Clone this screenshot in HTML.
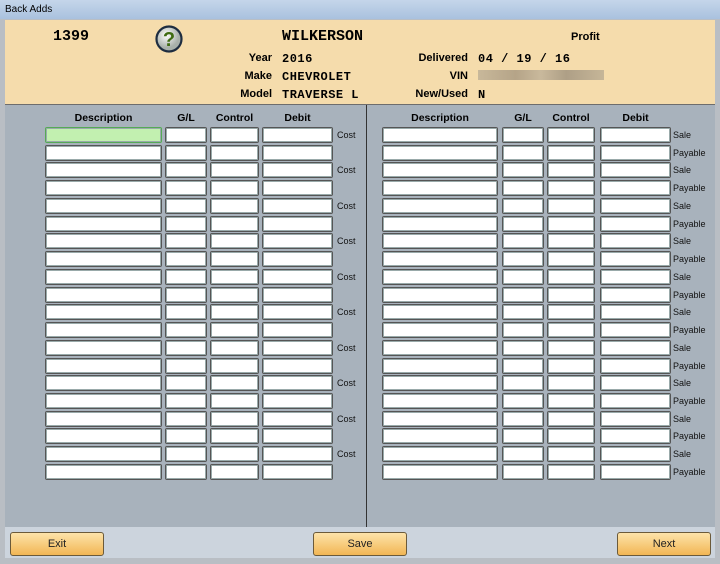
<!DOCTYPE html>
<html><head><style>
*{box-sizing:border-box;margin:0;padding:0}
body{width:720px;height:564px;overflow:hidden;background:#b9bec4;font-family:"Liberation Sans",sans-serif;position:relative}
.title{position:absolute;left:0;top:0;width:720px;height:19px;background:linear-gradient(#c5d6ea,#a9c1de);font-size:10px;color:#000;padding:4px 0 0 5px}
.hdr{position:absolute;left:5px;top:20px;width:710px;height:85px;background:#f5dcac;border-bottom:1px solid #6d6d6d}
.mono{font-family:"Liberation Mono",monospace;font-weight:bold}
.a{position:absolute;white-space:nowrap}
.lbl{font-size:11px;font-weight:bold;text-align:right}
.val{font-family:"Liberation Mono",monospace;font-size:12px;font-weight:bold;letter-spacing:0.5px}
.panel{position:absolute;left:5px;top:105px;width:710px;height:422px;background:#a8b2bc}
.div{position:absolute;left:366px;top:105px;width:1px;height:422px;background:#333}
.foot{position:absolute;left:5px;top:527px;width:710px;height:31px;background:#ccd4dd}
.btn{position:absolute;top:532px;height:24px;border:1px solid #6b5a3a;border-radius:3px;background:linear-gradient(#fde3aa,#f2b654);font-size:11px;text-align:center;line-height:22px;color:#222}
.rows{position:absolute;top:127px}
.r{height:17.74px;position:relative}
.b{position:absolute;top:0;height:16px;background:#fff;border:1px solid #555;border-radius:2px;box-shadow:inset 0 0 0 1px #9aa}
.t{position:absolute;top:3px;font-size:9px;color:#111}
.ch{position:absolute;top:112px;font-size:10.5px;font-weight:bold;text-align:center}
</style></head><body>
<div class="title">Back Adds</div>
<div class="hdr"></div>
<div class="a mono" style="left:53px;top:28px;font-size:15px">1399</div>
<svg class="a" style="left:155px;top:25px" width="28" height="28" viewBox="0 0 28 28"><defs><radialGradient id="g" cx="0.4" cy="0.35"><stop offset="0" stop-color="#fff"/><stop offset="1" stop-color="#a8b0aa"/></radialGradient></defs><circle cx="14" cy="14" r="12.5" fill="url(#g)" stroke="#1e2d40" stroke-width="2.2"/><text x="14" y="21" text-anchor="middle" font-family="Liberation Sans" font-weight="bold" font-size="20" fill="#3f6b12">?</text></svg>
<div class="a mono" style="left:282px;top:28px;font-size:15px">WILKERSON</div>
<div class="a lbl" style="right:448px;top:52px">Year</div>
<div class="a val" style="left:282px;top:52px">2016</div>
<div class="a lbl" style="right:448px;top:70px">Make</div>
<div class="a val" style="left:282px;top:70px">CHEVROLET</div>
<div class="a lbl" style="right:448px;top:88px">Model</div>
<div class="a val" style="left:282px;top:88px">TRAVERSE L</div>
<div class="a lbl" style="left:571px;top:31px">Profit</div>
<div class="a lbl" style="right:252px;top:52px">Delivered</div>
<div class="a val" style="left:478px;top:52px">04 / 19 / 16</div>
<div class="a lbl" style="right:252px;top:70px">VIN</div>
<div class="a" style="left:478px;top:70px;width:126px;height:10px;background:linear-gradient(90deg,#c8b89a,#b5a488 30%,#c9b99c 50%,#ae9f86 70%,#c6b698)"></div>
<div class="a lbl" style="right:252px;top:88px">New/Used</div>
<div class="a val" style="left:478px;top:88px">N</div>
<div class="panel"></div>
<div class="div"></div>
<div class="ch" style="left:45px;width:117px">Description</div>
<div class="ch" style="left:165px;width:42px">G/L</div>
<div class="ch" style="left:210px;width:49px">Control</div>
<div class="ch" style="left:262px;width:71px">Debit</div>
<div class="ch" style="left:382px;width:116px">Description</div>
<div class="ch" style="left:502px;width:42px">G/L</div>
<div class="ch" style="left:547px;width:48px">Control</div>
<div class="ch" style="left:600px;width:71px">Debit</div>
<div class="rows" style="left:0">
<div class="r"><div class="b" style="left:45px;width:117px;background:#c2f0b0;border-color:#5a5"></div><div class="b" style="left:165px;width:42px"></div><div class="b" style="left:210px;width:49px"></div><div class="b" style="left:262px;width:71px"></div><span class="t" style="left:337px">Cost</span></div>
<div class="r"><div class="b" style="left:45px;width:117px"></div><div class="b" style="left:165px;width:42px"></div><div class="b" style="left:210px;width:49px"></div><div class="b" style="left:262px;width:71px"></div></div>
<div class="r"><div class="b" style="left:45px;width:117px"></div><div class="b" style="left:165px;width:42px"></div><div class="b" style="left:210px;width:49px"></div><div class="b" style="left:262px;width:71px"></div><span class="t" style="left:337px">Cost</span></div>
<div class="r"><div class="b" style="left:45px;width:117px"></div><div class="b" style="left:165px;width:42px"></div><div class="b" style="left:210px;width:49px"></div><div class="b" style="left:262px;width:71px"></div></div>
<div class="r"><div class="b" style="left:45px;width:117px"></div><div class="b" style="left:165px;width:42px"></div><div class="b" style="left:210px;width:49px"></div><div class="b" style="left:262px;width:71px"></div><span class="t" style="left:337px">Cost</span></div>
<div class="r"><div class="b" style="left:45px;width:117px"></div><div class="b" style="left:165px;width:42px"></div><div class="b" style="left:210px;width:49px"></div><div class="b" style="left:262px;width:71px"></div></div>
<div class="r"><div class="b" style="left:45px;width:117px"></div><div class="b" style="left:165px;width:42px"></div><div class="b" style="left:210px;width:49px"></div><div class="b" style="left:262px;width:71px"></div><span class="t" style="left:337px">Cost</span></div>
<div class="r"><div class="b" style="left:45px;width:117px"></div><div class="b" style="left:165px;width:42px"></div><div class="b" style="left:210px;width:49px"></div><div class="b" style="left:262px;width:71px"></div></div>
<div class="r"><div class="b" style="left:45px;width:117px"></div><div class="b" style="left:165px;width:42px"></div><div class="b" style="left:210px;width:49px"></div><div class="b" style="left:262px;width:71px"></div><span class="t" style="left:337px">Cost</span></div>
<div class="r"><div class="b" style="left:45px;width:117px"></div><div class="b" style="left:165px;width:42px"></div><div class="b" style="left:210px;width:49px"></div><div class="b" style="left:262px;width:71px"></div></div>
<div class="r"><div class="b" style="left:45px;width:117px"></div><div class="b" style="left:165px;width:42px"></div><div class="b" style="left:210px;width:49px"></div><div class="b" style="left:262px;width:71px"></div><span class="t" style="left:337px">Cost</span></div>
<div class="r"><div class="b" style="left:45px;width:117px"></div><div class="b" style="left:165px;width:42px"></div><div class="b" style="left:210px;width:49px"></div><div class="b" style="left:262px;width:71px"></div></div>
<div class="r"><div class="b" style="left:45px;width:117px"></div><div class="b" style="left:165px;width:42px"></div><div class="b" style="left:210px;width:49px"></div><div class="b" style="left:262px;width:71px"></div><span class="t" style="left:337px">Cost</span></div>
<div class="r"><div class="b" style="left:45px;width:117px"></div><div class="b" style="left:165px;width:42px"></div><div class="b" style="left:210px;width:49px"></div><div class="b" style="left:262px;width:71px"></div></div>
<div class="r"><div class="b" style="left:45px;width:117px"></div><div class="b" style="left:165px;width:42px"></div><div class="b" style="left:210px;width:49px"></div><div class="b" style="left:262px;width:71px"></div><span class="t" style="left:337px">Cost</span></div>
<div class="r"><div class="b" style="left:45px;width:117px"></div><div class="b" style="left:165px;width:42px"></div><div class="b" style="left:210px;width:49px"></div><div class="b" style="left:262px;width:71px"></div></div>
<div class="r"><div class="b" style="left:45px;width:117px"></div><div class="b" style="left:165px;width:42px"></div><div class="b" style="left:210px;width:49px"></div><div class="b" style="left:262px;width:71px"></div><span class="t" style="left:337px">Cost</span></div>
<div class="r"><div class="b" style="left:45px;width:117px"></div><div class="b" style="left:165px;width:42px"></div><div class="b" style="left:210px;width:49px"></div><div class="b" style="left:262px;width:71px"></div></div>
<div class="r"><div class="b" style="left:45px;width:117px"></div><div class="b" style="left:165px;width:42px"></div><div class="b" style="left:210px;width:49px"></div><div class="b" style="left:262px;width:71px"></div><span class="t" style="left:337px">Cost</span></div>
<div class="r"><div class="b" style="left:45px;width:117px"></div><div class="b" style="left:165px;width:42px"></div><div class="b" style="left:210px;width:49px"></div><div class="b" style="left:262px;width:71px"></div></div>
</div>
<div class="rows" style="left:0">
<div class="r"><div class="b" style="left:382px;width:116px"></div><div class="b" style="left:502px;width:42px"></div><div class="b" style="left:547px;width:48px"></div><div class="b" style="left:600px;width:71px"></div><span class="t" style="left:673px">Sale</span></div>
<div class="r"><div class="b" style="left:382px;width:116px"></div><div class="b" style="left:502px;width:42px"></div><div class="b" style="left:547px;width:48px"></div><div class="b" style="left:600px;width:71px"></div><span class="t" style="left:673px">Payable</span></div>
<div class="r"><div class="b" style="left:382px;width:116px"></div><div class="b" style="left:502px;width:42px"></div><div class="b" style="left:547px;width:48px"></div><div class="b" style="left:600px;width:71px"></div><span class="t" style="left:673px">Sale</span></div>
<div class="r"><div class="b" style="left:382px;width:116px"></div><div class="b" style="left:502px;width:42px"></div><div class="b" style="left:547px;width:48px"></div><div class="b" style="left:600px;width:71px"></div><span class="t" style="left:673px">Payable</span></div>
<div class="r"><div class="b" style="left:382px;width:116px"></div><div class="b" style="left:502px;width:42px"></div><div class="b" style="left:547px;width:48px"></div><div class="b" style="left:600px;width:71px"></div><span class="t" style="left:673px">Sale</span></div>
<div class="r"><div class="b" style="left:382px;width:116px"></div><div class="b" style="left:502px;width:42px"></div><div class="b" style="left:547px;width:48px"></div><div class="b" style="left:600px;width:71px"></div><span class="t" style="left:673px">Payable</span></div>
<div class="r"><div class="b" style="left:382px;width:116px"></div><div class="b" style="left:502px;width:42px"></div><div class="b" style="left:547px;width:48px"></div><div class="b" style="left:600px;width:71px"></div><span class="t" style="left:673px">Sale</span></div>
<div class="r"><div class="b" style="left:382px;width:116px"></div><div class="b" style="left:502px;width:42px"></div><div class="b" style="left:547px;width:48px"></div><div class="b" style="left:600px;width:71px"></div><span class="t" style="left:673px">Payable</span></div>
<div class="r"><div class="b" style="left:382px;width:116px"></div><div class="b" style="left:502px;width:42px"></div><div class="b" style="left:547px;width:48px"></div><div class="b" style="left:600px;width:71px"></div><span class="t" style="left:673px">Sale</span></div>
<div class="r"><div class="b" style="left:382px;width:116px"></div><div class="b" style="left:502px;width:42px"></div><div class="b" style="left:547px;width:48px"></div><div class="b" style="left:600px;width:71px"></div><span class="t" style="left:673px">Payable</span></div>
<div class="r"><div class="b" style="left:382px;width:116px"></div><div class="b" style="left:502px;width:42px"></div><div class="b" style="left:547px;width:48px"></div><div class="b" style="left:600px;width:71px"></div><span class="t" style="left:673px">Sale</span></div>
<div class="r"><div class="b" style="left:382px;width:116px"></div><div class="b" style="left:502px;width:42px"></div><div class="b" style="left:547px;width:48px"></div><div class="b" style="left:600px;width:71px"></div><span class="t" style="left:673px">Payable</span></div>
<div class="r"><div class="b" style="left:382px;width:116px"></div><div class="b" style="left:502px;width:42px"></div><div class="b" style="left:547px;width:48px"></div><div class="b" style="left:600px;width:71px"></div><span class="t" style="left:673px">Sale</span></div>
<div class="r"><div class="b" style="left:382px;width:116px"></div><div class="b" style="left:502px;width:42px"></div><div class="b" style="left:547px;width:48px"></div><div class="b" style="left:600px;width:71px"></div><span class="t" style="left:673px">Payable</span></div>
<div class="r"><div class="b" style="left:382px;width:116px"></div><div class="b" style="left:502px;width:42px"></div><div class="b" style="left:547px;width:48px"></div><div class="b" style="left:600px;width:71px"></div><span class="t" style="left:673px">Sale</span></div>
<div class="r"><div class="b" style="left:382px;width:116px"></div><div class="b" style="left:502px;width:42px"></div><div class="b" style="left:547px;width:48px"></div><div class="b" style="left:600px;width:71px"></div><span class="t" style="left:673px">Payable</span></div>
<div class="r"><div class="b" style="left:382px;width:116px"></div><div class="b" style="left:502px;width:42px"></div><div class="b" style="left:547px;width:48px"></div><div class="b" style="left:600px;width:71px"></div><span class="t" style="left:673px">Sale</span></div>
<div class="r"><div class="b" style="left:382px;width:116px"></div><div class="b" style="left:502px;width:42px"></div><div class="b" style="left:547px;width:48px"></div><div class="b" style="left:600px;width:71px"></div><span class="t" style="left:673px">Payable</span></div>
<div class="r"><div class="b" style="left:382px;width:116px"></div><div class="b" style="left:502px;width:42px"></div><div class="b" style="left:547px;width:48px"></div><div class="b" style="left:600px;width:71px"></div><span class="t" style="left:673px">Sale</span></div>
<div class="r"><div class="b" style="left:382px;width:116px"></div><div class="b" style="left:502px;width:42px"></div><div class="b" style="left:547px;width:48px"></div><div class="b" style="left:600px;width:71px"></div><span class="t" style="left:673px">Payable</span></div>
</div>
<div class="foot"></div>
<div class="btn" style="left:10px;width:94px">Exit</div>
<div class="btn" style="left:313px;width:94px">Save</div>
<div class="btn" style="left:617px;width:94px">Next</div>
</body></html>
